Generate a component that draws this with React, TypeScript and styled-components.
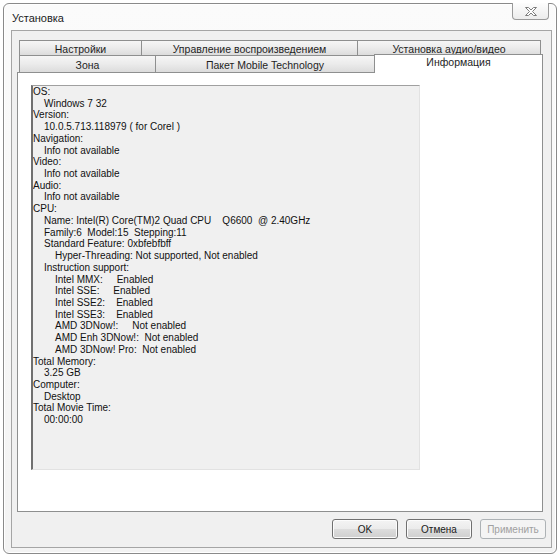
import React from "react";
import styled, { createGlobalStyle } from "styled-components";

const GlobalStyle = createGlobalStyle`
  html, body {
    margin: 0;
    padding: 0;
    background: #ffffff;
  }
  body {
    font-family: "Liberation Sans", Arial, sans-serif;
    font-size: 11px;
    color: #1a1a1a;
  }
`;

const topTabs = [
  { label: "Настройки", width: 123 },
  { label: "Управление воспроизведением", width: 217 },
  { label: "Установка аудио/видео", width: 184 },
];

const bottomTabs = [
  { label: "Зона", width: 137, active: false },
  { label: "Пакет Mobile Technology", width: 220, active: false },
  { label: "Информация", width: 169, active: true },
];

const infoLines: [number, string][] = [
  [0, "OS:"],
  [1, "Windows 7 32"],
  [0, "Version:"],
  [1, "10.0.5.713.118979 ( for Corel )"],
  [0, "Navigation:"],
  [1, "Info not available"],
  [0, "Video:"],
  [1, "Info not available"],
  [0, "Audio:"],
  [1, "Info not available"],
  [0, "CPU:"],
  [1, "Name: Intel(R) Core(TM)2 Quad CPU    Q6600  @ 2.40GHz"],
  [1, "Family:6  Model:15  Stepping:11"],
  [1, "Standard Feature: 0xbfebfbff"],
  [2, "Hyper-Threading: Not supported, Not enabled"],
  [1, "Instruction support:"],
  [2, "Intel MMX:     Enabled"],
  [2, "Intel SSE:     Enabled"],
  [2, "Intel SSE2:    Enabled"],
  [2, "Intel SSE3:    Enabled"],
  [2, "AMD 3DNow!:     Not enabled"],
  [2, "AMD Enh 3DNow!:  Not enabled"],
  [2, "AMD 3DNow! Pro:  Not enabled"],
  [0, "Total Memory:"],
  [1, "3.25 GB"],
  [0, "Computer:"],
  [1, "Desktop"],
  [0, "Total Movie Time:"],
  [1, "00:00:00"],
];

const App = () => {
  return (
    <>
      <GlobalStyle />
      <Window>
        <TitleBar>
          <Title>Установка</Title>
          <CloseButton>
            <svg width="14" height="11" viewBox="0 0 14 11">
              <path
                d="M1.5 1.5 H4.5 L7 4 L9.5 1.5 H12.5 L8.5 5.5 L12.5 9.5 H9.5 L7 7 L4.5 9.5 H1.5 L5.5 5.5 Z"
                fill="#ffffff"
                stroke="#7c7c7c"
                strokeWidth="1"
                strokeLinejoin="round"
              />
            </svg>
          </CloseButton>
        </TitleBar>
        <Client>
          <TabControl>
            <TabRow>
              {topTabs.map((t) => (
                <Tab key={t.label} $width={t.width} $height={15}>
                  {t.label}
                </Tab>
              ))}
            </TabRow>
            <TabRow>
              {bottomTabs.map((t) =>
                t.active ? (
                  <ActiveTab key={t.label} $width={t.width}>
                    {t.label}
                  </ActiveTab>
                ) : (
                  <Tab key={t.label} $width={t.width} $height={17}>
                    {t.label}
                  </Tab>
                )
              )}
            </TabRow>
            <Panel>
              <InfoBox>
                {infoLines.map(([level, text], i) => (
                  <InfoLine key={i} $level={level}>
                    {text}
                  </InfoLine>
                ))}
              </InfoBox>
            </Panel>
          </TabControl>
          <ButtonRow>
            <Button>OK</Button>
            <Button>Отмена</Button>
            <Button disabled>Применить</Button>
          </ButtonRow>
        </Client>
      </Window>
    </>
  );
};

const Window = styled.div`
  position: relative;
  margin: 3px 0 0 3px;
  width: 552px;
  height: 549px;
  border: 1px solid #8a8a8a;
  border-radius: 6px;
  background: linear-gradient(to bottom, #fbfbfb, #f3f3f3);
  box-shadow: inset 0 0 0 1px #ffffff;
  display: flex;
  flex-direction: column;
`;

const TitleBar = styled.div`
  height: 26px;
  display: flex;
  align-items: center;
  padding-left: 8px;
`;

const Title = styled.div`
  font-family: "Liberation Sans", Arial, sans-serif;
  font-size: 11px;
  color: #1c1c1c;
  margin-top: 1px;
`;

const CloseButton = styled.div`
  position: absolute;
  top: -1px;
  right: 7px;
  width: 37px;
  height: 17px;
  box-sizing: border-box;
  border: 1px solid #9a9a9a;
  border-top: none;
  border-radius: 0 0 4px 4px;
  background: linear-gradient(to bottom, #fdfdfd, #ececec);
  display: flex;
  align-items: center;
  justify-content: center;
`;

const Client = styled.div`
  flex: 1;
  margin: 0 4px 5px 7px;
  border: 1px solid #a5a5a5;
  background: #f0f0f0;
  display: flex;
  flex-direction: column;
  padding: 9px 8px 0 5px;
`;

const TabControl = styled.div`
  display: flex;
  flex-direction: column;
  width: 526px;
`;

const TabRow = styled.div`
  display: flex;
  padding-left: 2px;
  position: relative;
  z-index: 1;
`;

const Tab = styled.div<{ $width: number; $height: number }>`
  width: ${(p) => p.$width}px;
  height: ${(p) => p.$height}px;
  box-sizing: border-box;
  border: 1px solid #8e8f8f;
  border-bottom: none;
  margin-right: -1px;
  background: linear-gradient(to bottom, #f6f6f6 0%, #ebebeb 50%, #dcdcdc 100%);
  display: flex;
  align-items: center;
  justify-content: center;
  font-size: 10.5px;
  color: #1e1e1e;
  white-space: nowrap;
  padding-top: 1px;
`;

const ActiveTab = styled.div<{ $width: number }>`
  width: ${(p) => p.$width}px;
  height: 19px;
  margin-top: -1px;
  margin-bottom: -1px;
  box-sizing: border-box;
  border: 1px solid #8e8f8f;
  border-bottom: none;
  background: #ffffff;
  display: flex;
  justify-content: center;
  padding-top: 1px;
  font-size: 10.5px;
  color: #1e1e1e;
  white-space: nowrap;
`;

const Panel = styled.div`
  height: 440px;
  box-sizing: border-box;
  border: 1px solid #8e8f8f;
  background: #ffffff;
  padding: 12px 0 0 13px;
`;

const InfoBox = styled.div`
  width: 389px;
  height: 385px;
  box-sizing: border-box;
  border-top: 1px solid #a0a0a0;
  border-left: 2px solid #707070;
  border-right: 1px solid #e2e2e2;
  border-bottom: 1px solid #e2e2e2;
  background: #f0f0f0;
  padding-top: 0;
  overflow: hidden;
`;

const InfoLine = styled.div<{ $level: number }>`
  font-family: "Liberation Sans", Arial, sans-serif;
  font-size: 10px;
  line-height: 11.72px;
  color: #111111;
  white-space: pre;
  padding-left: ${(p) => p.$level * 11}px;
`;

const ButtonRow = styled.div`
  display: flex;
  justify-content: flex-end;
  gap: 8px;
  padding: 7px 0 0 0;
  margin-right: -3px;
`;

const Button = styled.button`
  width: 66px;
  height: 20px;
  box-sizing: border-box;
  border: 1px solid #707070;
  border-radius: 3px;
  background: linear-gradient(to bottom, #f4f4f4 0%, #ebebeb 50%, #dddddd 51%, #cfcfcf 100%);
  box-shadow: inset 0 0 0 1px #fcfcfc;
  font-family: "Liberation Sans", Arial, sans-serif;
  font-size: 10px;
  color: #1a1a1a;
  padding: 0;

  &:disabled {
    border-color: #adb2b5;
    background: #f4f4f4;
    color: #a0a0a0;
    box-shadow: none;
  }
`;

export default App;
